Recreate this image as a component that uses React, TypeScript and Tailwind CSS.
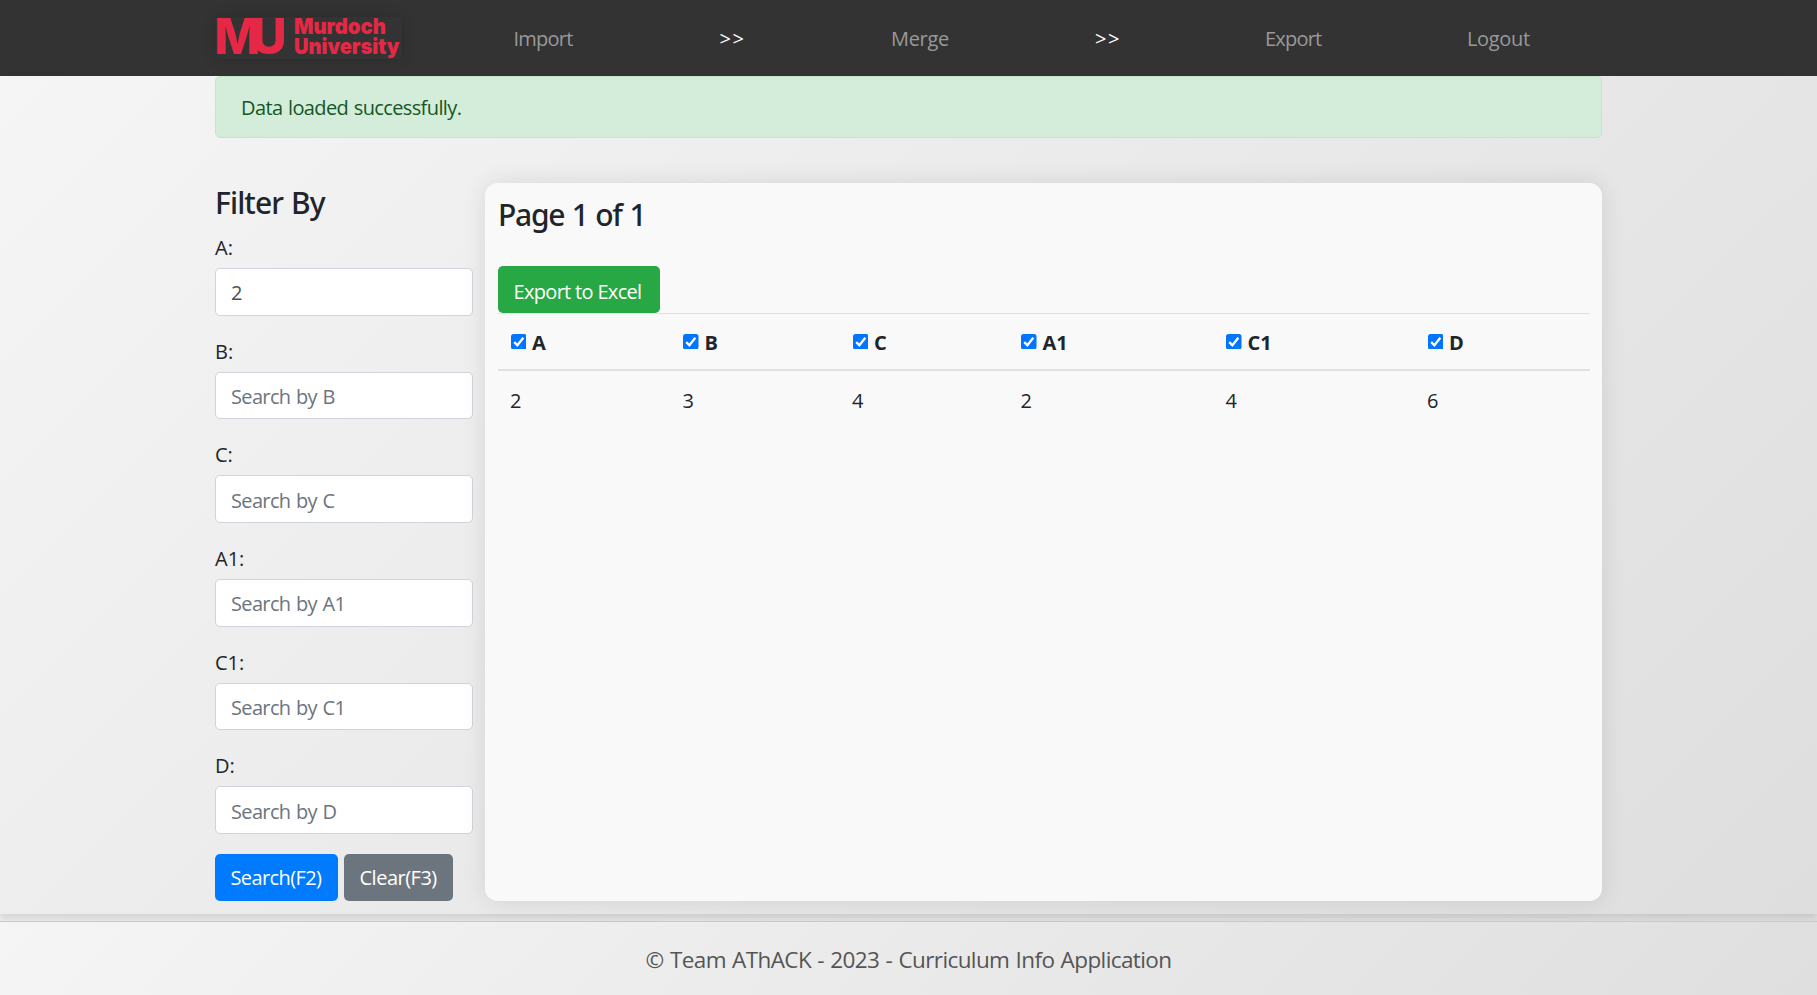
const filters = [
  { name: "A", value: "2" },
  { name: "B", value: "" },
  { name: "C", value: "" },
  { name: "A1", value: "" },
  { name: "C1", value: "" },
  { name: "D", value: "" },
];

const columns = [
  { name: "A", value: "2", width: "w-[172.5px]" },
  { name: "B", value: "3", width: "w-[169.5px]" },
  { name: "C", value: "4", width: "w-[168.5px]" },
  { name: "A1", value: "2", width: "w-[205px]" },
  { name: "C1", value: "4", width: "w-[201.5px]" },
  { name: "D", value: "6", width: "w-[175px]" },
];

function Logo() {
  return (
    <svg
      className="h-[42px] w-[186px] shrink-0 overflow-visible shadow-[0_0_12px_rgba(0,0,0,0.18)]"
      viewBox="0 0 186 42"
      fill="#e52845"
      fontFamily="Inter, sans-serif"
    >
      <text x="-1.5" y="37" fontSize="48.8" fontWeight="800" letterSpacing="-9.2">MU</text>
      <text x="78" y="17" fontSize="21.5" fontWeight="900" textLength="92" lengthAdjust="spacingAndGlyphs">Murdoch</text>
      <text x="78" y="37" fontSize="21.5" fontWeight="900" textLength="105.5" lengthAdjust="spacingAndGlyphs">University</text>
    </svg>
  );
}

function CheckBox() {
  return (
    <svg className="mt-[-4px] h-[15.5px] w-[15.5px]" viewBox="0 0 15.5 15.5">
      <rect width="15.5" height="15.5" rx="2.5" fill="#0075ff" />
      <path d="M3.2 8.1 6.4 11.2 12.3 3.8" fill="none" stroke="#fff" strokeWidth="2.3" />
    </svg>
  );
}

export default function App() {
  return (
    <div className="flex h-[995px] w-[1817px] flex-col overflow-hidden bg-linear-[135deg,#f5f5f5,#dfdfdf] font-['Open_Sans',sans-serif] text-[20px] leading-[30px] text-[#212529] [word-spacing:1px]">
      <header className="flex h-[76px] shrink-0 items-center bg-[#333] pl-[216px] text-[#999]">
        <Logo />
        <nav className="flex pt-[1px]">
          <a className="ml-[111.5px] w-[206px] tracking-[-0.75px]">Import</a>
          <span className="w-[171.5px] tracking-[1.5px] text-white">&gt;&gt;</span>
          <a className="w-[204px] tracking-[-0.31px]">Merge</a>
          <span className="w-[170px] tracking-[1.5px] text-white">&gt;&gt;</span>
          <a className="w-[202px] tracking-[-0.8px]">Export</a>
          <a className="tracking-[-0.33px]">Logout</a>
        </nav>
      </header>

      <main className="h-[838px] shrink-0 bg-linear-[135deg,#f5f5f5,#dedede] px-[215px] shadow-[0_4px_8px_rgba(0,0,0,0.12)]">
        <div className="flex h-[62px] w-[1387px] items-center rounded-[5px] border border-[#c3e6cb] bg-[#d4edda] pt-[1px] pl-[25px] tracking-[-0.62px] text-[#155724]">
          Data loaded successfully.
        </div>

        <div className="mt-[45px] flex">
          <aside className="w-[258px]">
            <h4 className="mt-[1px] h-[47px] font-['Noto_Sans',sans-serif] text-[30px] leading-[38px] font-medium tracking-[-0.9px]">Filter By</h4>
            {filters.map((f) => (
              <div key={f.name} className="h-[103.7px]">
                <label className="block h-[37px] pt-[2px]">{f.name}:</label>
                <div
                  className={
                    "flex h-[47.5px] items-center rounded-[5px] border border-[#ced4da] bg-white pt-[3px] pl-[15px] tracking-[-0.65px] " +
                    (f.value ? "text-[#495057]" : "text-[#6c757d]")
                  }
                >
                  {f.value || `Search by ${f.name}`}
                </div>
              </div>
            ))}
            <div className="mt-[0.8px] flex gap-[6px] text-white">
              <button className="h-[47px] w-[123px] rounded-[5px] bg-[#007bff] pt-[2px] pl-[15.5px] text-left tracking-[-0.6px]">Search(F2)</button>
              <button className="h-[47px] w-[109px] rounded-[5px] bg-[#6c757d] pt-[2px] pl-[15.5px] text-left tracking-[-0.5px]">Clear(F3)</button>
            </div>
          </aside>

          <section className="ml-[12px] h-[718px] w-[1117px] rounded-[12.5px] bg-[#f9f9f9] px-[13px] pt-[13px] shadow-[0_0_25px_rgba(0,0,0,0.1)]">
            <h4 className="h-[70px] font-['Noto_Sans',sans-serif] text-[30px] leading-[38px] font-medium tracking-[-1.25px]">Page 1 of 1</h4>
            <button className="block h-[47px] w-[162px] rounded-[5px] bg-[#28a745] pt-[4px] pl-[15.5px] text-left tracking-[-0.68px] text-white">
              Export to Excel
            </button>
            <table className="w-[1092px] table-fixed border-t border-[#dee2e6] text-left">
              <thead>
                <tr className="h-[56px] border-b-2 border-[#dee2e6]">
                  {columns.map((c) => (
                    <th key={c.name} className={"p-0 pl-[12.5px] font-bold " + c.width}>
                      <span className="flex items-center gap-[6px] pt-[4px]">
                        <CheckBox />
                        {c.name}
                      </span>
                    </th>
                  ))}
                </tr>
              </thead>
              <tbody>
                <tr className="h-[57px]">
                  {columns.map((c) => (
                    <td key={c.name} className="p-0 pt-[4px] pl-[12px]">{c.value}</td>
                  ))}
                </tr>
              </tbody>
            </table>
          </section>
        </div>
      </main>

      <footer className="mt-[7px] flex h-[74px] shrink-0 items-center justify-center border-t border-[#c8c8c8] bg-linear-[135deg,#f5f5f5,#dfdfdf] pt-[2px] text-[22.5px] tracking-[-0.6px] text-[#555]">
        © Team AThACK - 2023 - Curriculum Info Application
      </footer>
    </div>
  );
}
